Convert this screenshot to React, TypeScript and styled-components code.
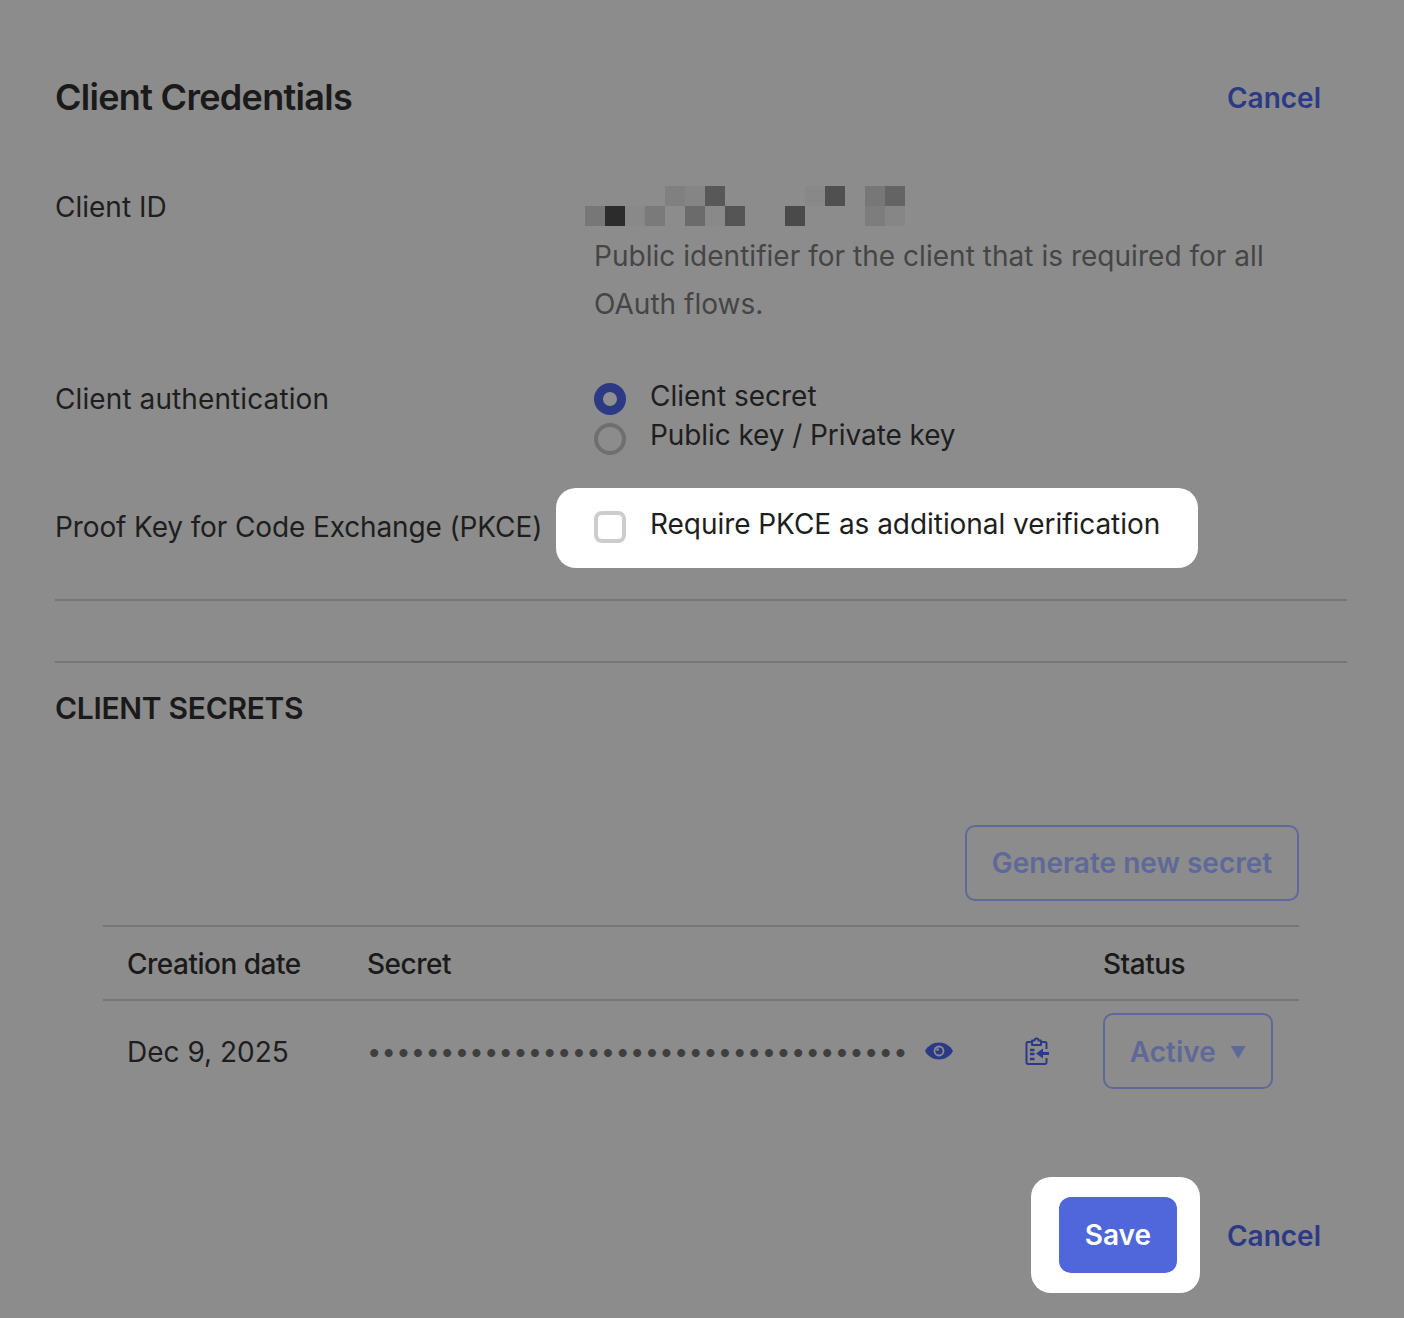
import React from 'react';
import styled, { createGlobalStyle } from 'styled-components';

const GlobalStyle = createGlobalStyle`
  html, body {
    margin: 0;
    padding: 0;
    background: #8c8c8c;
  }
  body {
    font-family: Inter, "Liberation Sans", sans-serif;
    color: #1c1c1c;
  }
`;

const redactedCells: [number, number, string][] = [
  [0, 1, '#777777'],
  [1, 1, '#2c2c2c'],
  [2, 1, '#898989'],
  [3, 1, '#7a7a7a'],
  [5, 1, '#6b6b6b'],
  [6, 1, '#898989'],
  [7, 1, '#555555'],
  [10, 1, '#4a4a4a'],
  [14, 1, '#7d7d7d'],
  [15, 1, '#868686'],
  [4, 0, '#808080'],
  [5, 0, '#858585'],
  [6, 0, '#585858'],
  [11, 0, '#888888'],
  [12, 0, '#505050'],
  [14, 0, '#777777'],
  [15, 0, '#646464'],
];

const EyeIcon = () => (
  <svg width="28" height="18" viewBox="0 0 28 18">
    <path
      fill="#2c3a85"
      d="M0 9C3 3.500 8 0.500 14 0.500S25 3.500 28 9C25 14.500 20 17.500 14 17.500S3 14.500 0 9Z"
    />
    <circle cx="14" cy="9" r="5.400" fill="#8c8c8c" />
    <circle cx="14" cy="9" r="3.600" fill="#2c3a85" />
    <circle cx="12.600" cy="7.600" r="1.300" fill="#8c8c8c" />
  </svg>
);

const ClipboardIcon = () => (
  <svg width="25" height="30" viewBox="0 0 25 30" fill="none" stroke="#2c3a85">
    <path
      strokeWidth="2"
      d="M6 6H3A1.500 1.500 0 0 0 1.500 7.500V26.500A1.500 1.500 0 0 0 3 28H20A1.500 1.500 0 0 0 21.500 26.500V22M21.500 13V7.500A1.500 1.500 0 0 0 20 6H17"
    />
    <path strokeWidth="2" strokeLinejoin="round" d="M7 9V4.500H9.500A2 2 0 0 1 13.500 4.500H16V9Z" />
    <path strokeWidth="2.400" d="M5 14H9.500M5 18H9.500M5 23H9.500" />
    <path strokeWidth="3" d="M15 17.500H24" />
    <path fill="#2c3a85" stroke="none" d="M11 17.500L18 12.500V22.500Z" />
  </svg>
);

const App: React.FC = () => {
  return (
    <>
      <GlobalStyle />
      <Page>
        <HeaderRow>
          <Title>Client Credentials</Title>
          <LinkAction>Cancel</LinkAction>
        </HeaderRow>

        <FieldRow $top={69}>
          <FieldLabel $offset={1}>Client ID</FieldLabel>
          <FieldValue>
            <svg width="320" height="40" viewBox="0 0 320 40" style={{ display: 'block', marginLeft: -9 }}>
              {redactedCells.map(([col, row, fill]) => (
                <rect key={`${col}-${row}`} x={col * 20} y={row * 20} width="20" height="20" fill={fill} />
              ))}
            </svg>
            <HelpText>
              Public identifier for the client that is required for all
              <br />
              OAuth flows.
            </HelpText>
          </FieldValue>
        </FieldRow>

        <FieldRow $top={49}>
          <FieldLabel $offset={2} $tracking={0.1}>
            Client authentication
          </FieldLabel>
          <FieldValue>
            <RadioRow>
              <RadioDot $checked />
              <OptionText $lift={1}>Client secret</OptionText>
            </RadioRow>
            <RadioRow>
              <RadioDot />
              <OptionText $tracking={-0.08}>Public key / Private key</OptionText>
            </RadioRow>
          </FieldValue>
        </FieldRow>

        <PkceRow>
          <FieldLabel $offset={19} $tracking={-0.12}>
            Proof Key for Code Exchange (PKCE)
          </FieldLabel>
          <Highlight>
            <CheckBox />
            <OptionText $lift={3} $tracking={-0.05}>
              Require PKCE as additional verification
            </OptionText>
          </Highlight>
        </PkceRow>

        <Divider $top={31} />
        <Divider $top={60} />

        <SectionTitle>CLIENT SECRETS</SectionTitle>

        <SecretsPanel>
          <GenerateRow>
            <OutlineButton>Generate new secret</OutlineButton>
          </GenerateRow>
          <SecretsTable>
            <thead>
              <tr>
                <HeadCell $width={240}>Creation date</HeadCell>
                <HeadCell $width={736}>Secret</HeadCell>
                <HeadCell>Status</HeadCell>
              </tr>
            </thead>
            <tbody>
              <tr>
                <DateCell>Dec 9, 2025</DateCell>
                <BodyCell>
                  <SecretCell>
                    <SecretDots>{'•'.repeat(37)}</SecretDots>
                    <EyeSlot>
                      <EyeIcon />
                    </EyeSlot>
                    <ClipSlot>
                      <ClipboardIcon />
                    </ClipSlot>
                  </SecretCell>
                </BodyCell>
                <BodyCell>
                  <StatusSelect>
                    Active
                    <Caret>▼</Caret>
                  </StatusSelect>
                </BodyCell>
              </tr>
            </tbody>
          </SecretsTable>
        </SecretsPanel>

        <FooterRow>
          <SaveHighlight>
            <SaveButton>Save</SaveButton>
          </SaveHighlight>
          <LinkAction>Cancel</LinkAction>
        </FooterRow>
      </Page>
    </>
  );
};

const Page = styled.div`
  box-sizing: border-box;
  width: 1404px;
  height: 1318px;
  padding: 77px 57px 0 55px;
  overflow: hidden;
`;

const HeaderRow = styled.div`
  display: flex;
  justify-content: space-between;
  align-items: center;
  height: 40px;
  padding-right: 26px;
`;

const Title = styled.h1`
  margin: 0;
  font-size: 36px;
  font-weight: 600;
  letter-spacing: -0.7px;
  line-height: 40px;
  color: #1a1a1a;
`;

const LinkAction = styled.a`
  padding-top: 1px;
  font-size: 28px;
  font-weight: 600;
  line-height: 40px;
  color: #2c3a85;
`;

const FieldRow = styled.div<{ $top: number }>`
  display: grid;
  grid-template-columns: 539px 1fr;
  margin-top: ${(p) => p.$top}px;
`;

const FieldLabel = styled.div<{ $offset: number; $tracking?: number }>`
  font-size: 28px;
  line-height: 40px;
  padding-top: ${(p) => p.$offset}px;
  letter-spacing: ${(p) => p.$tracking ?? 0}px;
  color: #1e1e1e;
  white-space: nowrap;
`;

const FieldValue = styled.div`
  display: flex;
  flex-direction: column;
`;

const HelpText = styled.p`
  margin: 6px 0 0;
  font-size: 28px;
  letter-spacing: 0.03px;
  line-height: 48px;
  color: #454545;
`;

const RadioRow = styled.label`
  display: flex;
  align-items: center;
  gap: 24px;
  height: 40px;
`;

const RadioDot = styled.span<{ $checked?: boolean }>`
  box-sizing: border-box;
  width: 32px;
  height: 32px;
  border-radius: 50%;
  flex: none;
  position: relative;
  top: 2px;
  background: ${(p) => (p.$checked ? '#8f8f8f' : 'transparent')};
  border: ${(p) => (p.$checked ? '9.5px solid #2c3a85' : '4px solid #6f6f6f')};
`;

const OptionText = styled.span<{ $tracking?: number; $lift?: number }>`
  font-size: 28px;
  line-height: 40px;
  letter-spacing: ${(p) => p.$tracking ?? 0}px;
  color: #1e1e1e;
  white-space: nowrap;
  position: relative;
  top: ${(p) => -(p.$lift ?? 2)}px;
`;

const PkceRow = styled.div`
  display: flex;
  align-items: flex-start;
  margin-top: 31px;
`;

const Highlight = styled.div`
  box-sizing: border-box;
  display: flex;
  align-items: center;
  gap: 24px;
  width: 642px;
  height: 80px;
  margin-left: auto;
  margin-right: 149px;
  padding: 0 0 2px 38px;
  background: #fff;
  border-radius: 20px;
`;

const CheckBox = styled.span`
  box-sizing: border-box;
  width: 32px;
  height: 32px;
  flex: none;
  background: #fff;
  border: 4px solid #cccccc;
  border-radius: 8px;
`;

const Divider = styled.hr<{ $top: number }>`
  margin: ${(p) => p.$top}px 0 0;
  border: 0;
  height: 2px;
  background: #767676;
`;

const SectionTitle = styled.h2`
  margin: 25px 0 0;
  font-size: 30px;
  font-weight: 600;
  line-height: 40px;
  letter-spacing: -0.3px;
  color: #1a1a1a;
`;

const SecretsPanel = styled.div`
  margin: 0 48px;
`;

const GenerateRow = styled.div`
  display: flex;
  justify-content: flex-end;
  margin-top: 97px;
`;

const OutlineButton = styled.button`
  box-sizing: border-box;
  width: 334px;
  height: 76px;
  background: transparent;
  border: 2px solid #5f6999;
  border-radius: 10px;
  font-family: inherit;
  font-size: 28px;
  font-weight: 600;
  color: #5f6999;
`;

const SecretsTable = styled.table`
  width: 100%;
  margin-top: 24px;
  border-collapse: collapse;
  table-layout: fixed;
`;

const HeadCell = styled.th<{ $width?: number }>`
  box-sizing: border-box;
  ${(p) => (p.$width ? `width: ${p.$width}px;` : '')}
  height: 74px;
  padding: 2px 0 0 24px;
  border-top: 2px solid #767676;
  border-bottom: 2px solid #767676;
  font-size: 28px;
  font-weight: 500;
  letter-spacing: -0.5px;
  text-align: left;
  color: #1a1a1a;
`;

const BodyCell = styled.td`
  height: 100px;
  padding: 0 0 0 24px;
  font-size: 28px;
  color: #1e1e1e;
  vertical-align: middle;
`;

const DateCell = styled(BodyCell)`
  height: 98px;
  padding-top: 2px;
`;

const SecretCell = styled.div`
  display: flex;
  align-items: center;
`;

const SecretDots = styled.span`
  width: 544px;
  padding-bottom: 2px;
  flex: none;
  font-size: 25.6px;
  letter-spacing: 0.22px;
  color: #3f3f3f;
  white-space: nowrap;
  overflow: hidden;
`;

const EyeSlot = styled.span`
  display: flex;
  width: 100px;
  margin-left: 14px;
  flex: none;
`;

const ClipSlot = styled.span`
  display: flex;
  flex: none;
`;

const StatusSelect = styled.div`
  box-sizing: border-box;
  display: flex;
  align-items: center;
  justify-content: center;
  gap: 14px;
  width: 170px;
  height: 76px;
  padding-top: 2px;
  border: 2px solid #5f6999;
  border-radius: 10px;
  font-weight: 600;
  color: #5f6999;
`;

const Caret = styled.span`
  font-size: 16px;
`;

const FooterRow = styled.div`
  display: flex;
  align-items: center;
  justify-content: flex-end;
  gap: 27px;
  margin-top: 76px;
  padding-right: 26px;
`;

const SaveHighlight = styled.div`
  box-sizing: border-box;
  display: flex;
  align-items: center;
  justify-content: center;
  width: 169px;
  height: 116px;
  padding-left: 5px;
  background: #fff;
  border-radius: 20px;
`;

const SaveButton = styled.button`
  width: 118px;
  height: 76px;
  border: 0;
  border-radius: 12px;
  background: #5066db;
  font-family: inherit;
  font-size: 28px;
  font-weight: 600;
  color: #fff;
`;

export default App;
